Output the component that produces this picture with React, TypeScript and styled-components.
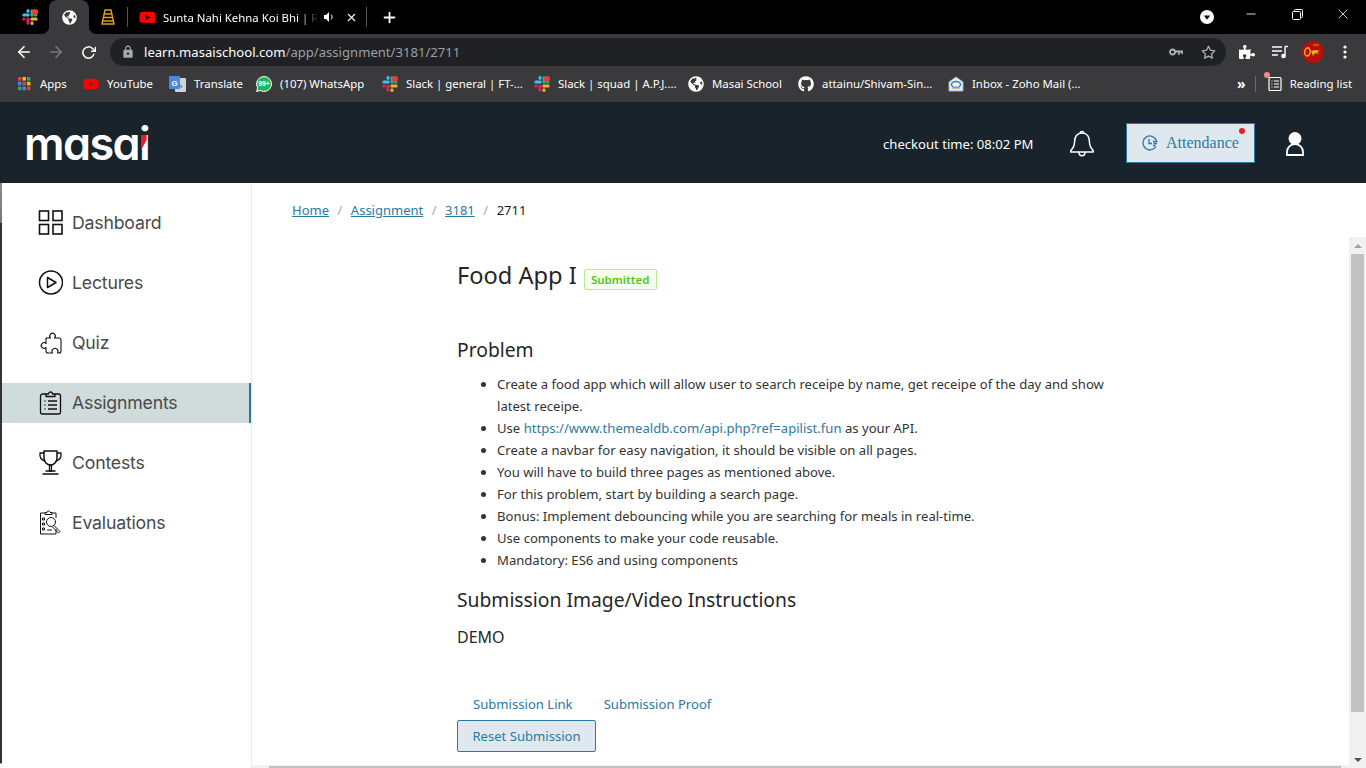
import React from "react";
import styled, { createGlobalStyle } from "styled-components";
import { FaGithub, FaYoutube, FaGlobeAmericas, FaPuzzlePiece } from "react-icons/fa";
import { FiArrowLeft, FiArrowRight, FiRotateCw, FiX, FiPlus, FiStar, FiMinus } from "react-icons/fi";
import { MdLock } from "react-icons/md";

const GlobalStyle = createGlobalStyle`
  html, body { margin: 0; padding: 0; height: 100%; overflow: hidden; background: #fff; }
  * { box-sizing: border-box; }
`;

const chromeFont = `"Noto Sans", "Open Sans", sans-serif`;
const pageFont = `"Noto Sans", "Open Sans", sans-serif`;
const blue = "#2b7aa3";

const Page = styled.div`
  width: 1366px;
  height: 768px;
  display: flex;
  flex-direction: column;
  overflow: hidden;
`;

/* browser chrome */
const TabStrip = styled.div`
  height: 34px;
  background: #000;
  display: flex;
  align-items: center;
  color: #fff;
  font: 11.4px ${chromeFont};
  flex-shrink: 0;
`;

const TabSlot = styled.div<{ $w: number; $inset?: number }>`
  width: ${p => p.$w}px;
  height: 34px;
  padding-left: ${p => p.$inset ?? 0}px;
  flex-shrink: 0;
  display: flex;
  align-items: center;
  justify-content: center;
`;

const ActiveTab = styled(TabSlot)`
  position: relative;
  background: #3a3a3c;
  border-radius: 8px 8px 0 0;
  &::before,
  &::after {
    content: "";
    position: absolute;
    bottom: 0;
    width: 8px;
    height: 8px;
  }
  &::before {
    left: -8px;
    background: radial-gradient(circle at 0 0, transparent 8px, #3a3a3c 8.5px);
  }
  &::after {
    right: -8px;
    background: radial-gradient(circle at 100% 0, transparent 8px, #3a3a3c 8.5px);
  }
`;

const TabDivider = styled.div`
  width: 1px;
  height: 20px;
  background: #55565a;
  flex-shrink: 0;
`;

const MediaTab = styled.div`
  width: 238px;
  height: 34px;
  padding-left: 11px;
  display: flex;
  align-items: center;
  flex-shrink: 0;
`;

const TabTitle = styled.div`
  width: 155px;
  margin-left: 7px;
  overflow: hidden;
  white-space: nowrap;
  -webkit-mask-image: linear-gradient(90deg, #000 88%, transparent 100%);
  mask-image: linear-gradient(90deg, #000 88%, transparent 100%);
`;

const StripSpacer = styled.div`
  flex: 1;
`;

const WindowButton = styled.div<{ $w: number }>`
  width: ${p => p.$w}px;
  height: 28px;
  margin-top: -6px;
  display: flex;
  align-items: center;
  justify-content: center;
  flex-shrink: 0;
`;

const Toolbar = styled.div`
  height: 32px;
  background: #3a3a3c;
  display: flex;
  align-items: flex-end;
  flex-shrink: 0;
  color: #fff;
`;

const NavButton = styled.div<{ $w: number; $dim?: boolean }>`
  width: ${p => p.$w}px;
  height: 28px;
  display: flex;
  align-items: center;
  justify-content: center;
  color: ${p => (p.$dim ? "#7a7a7c" : "#fff")};
  flex-shrink: 0;
`;

const UrlBar = styled.div`
  width: 1116px;
  height: 28px;
  margin: 0 5px 0 6px;
  border-radius: 14px;
  background: #202124;
  display: flex;
  align-items: center;
  padding-left: 11px;
  flex-shrink: 0;
`;

const UrlText = styled.div`
  margin-left: 9px;
  flex: 1;
  font: 13.1px ${chromeFont};
  color: #fff;
`;

const UrlPath = styled.span`
  color: #9aa0a6;
`;

const UrlIcon = styled.div<{ $w: number }>`
  width: ${p => p.$w}px;
  display: flex;
  justify-content: center;
  color: #b0b2b5;
`;

const BookmarkBar = styled.div`
  height: 36px;
  background: #3a3a3c;
  display: flex;
  align-items: center;
  color: #fff;
  font: 11.4px ${chromeFont};
  flex-shrink: 0;
  padding: 0 0 1px 16px;
`;

const Bookmark = styled.div<{ $w: number }>`
  width: ${p => p.$w}px;
  display: flex;
  align-items: center;
  gap: 8px;
  white-space: nowrap;
  flex-shrink: 0;
`;

const BookmarkEnd = styled.div`
  margin-left: auto;
  display: flex;
  align-items: center;
  padding-right: 14px;
`;

const Chevrons = styled.span`
  font-size: 14px;
  font-weight: 700;
  line-height: 14px;
`;

const BarDivider = styled.div`
  width: 1px;
  height: 16px;
  margin: 0 11px 0 9px;
  background: #6a6a6c;
`;

const ReadingIcon = styled.div`
  position: relative;
  width: 16px;
  height: 16px;
  margin-right: 7px;
  &::before {
    content: "";
    position: absolute;
    left: -3px;
    top: -4px;
    width: 6px;
    height: 6px;
    border-radius: 50%;
    background: #f28b82;
  }
`;

/* site header */
const SiteHeader = styled.header`
  height: 81px;
  background: #18232b;
  display: flex;
  align-items: center;
  color: #fff;
  flex-shrink: 0;
`;

const Logo = styled.div`
  margin: 2px 0 0 24px;
  width: 124px;
  font: 600 45px/1 Inter, "Noto Sans", sans-serif;
  font-feature-settings: "cv11";
  letter-spacing: -1.6px;
  color: #fff;
  white-space: nowrap;
  display: flex;
`;

const LogoI = styled.span`
  position: relative;
  &::after {
    content: "";
    position: absolute;
    right: 2.5px;
    top: 14px;
    width: 6px;
    height: 16px;
    background: #e2202c;
    clip-path: polygon(0 0, 100% 0, 100% 30%, 0 100%);
  }
`;

const HeaderRight = styled.div`
  margin-left: auto;
  margin-top: 2px;
  display: flex;
  align-items: center;
`;

const Checkout = styled.div`
  font: 13.1px ${pageFont};
  width: 186px;
  white-space: nowrap;
`;

const AttendanceButton = styled.div`
  position: relative;
  margin: -2px 31px 0 31px;
  width: 129px;
  height: 40px;
  background: #dfe8ee;
  border: 1px solid ${blue};
  display: flex;
  align-items: center;
  padding: 1px 0 0 15px;
  gap: 8px;
  color: ${blue};
  font: 16px "Liberation Serif", serif;
  &::after {
    content: "";
    position: absolute;
    top: 4px;
    right: 9px;
    width: 6px;
    height: 6px;
    border-radius: 50%;
    background: #e2202c;
  }
`;

const PersonWrap = styled.div`
  margin-right: 62px;
  display: flex;
`;

/* body */
const Body = styled.div`
  flex: 1;
  display: flex;
  min-height: 0;
  background: #fff;
`;

const WindowEdge = styled.div`
  width: 2px;
  background: linear-gradient(180deg, #8a8a8a 0, #777 40px, #333 40px, #333 580px, #999 580px, #999 581px, #fff 581px);
  flex-shrink: 0;
`;

const Sidebar = styled.nav`
  width: 250px;
  border-right: 1px solid #e6e8ef;
  padding-top: 20px;
  display: flex;
  flex-direction: column;
  gap: 20px;
  flex-shrink: 0;
`;

const NavItem = styled.div<{ $active?: boolean }>`
  height: 40px;
  display: flex;
  align-items: center;
  gap: 9px;
  padding-left: 36px;
  padding-bottom: 1px;
  background: ${p => (p.$active ? "#d0dbdc" : "transparent")};
  border-right: 2px solid ${p => (p.$active ? blue : "transparent")};
  color: #4a4a4a;
  font: 17.7px Inter, "Noto Sans", sans-serif;
  letter-spacing: -0.2px;
`;

const Content = styled.main`
  flex: 1;
  min-width: 0;
  display: flex;
  flex-direction: column;
  font-family: ${pageFont};
`;

const Breadcrumb = styled.div`
  height: 54px;
  padding: 18px 0 0 40px;
  display: flex;
  font-size: 13px;
  line-height: 18px;
  color: #222;
`;

const CrumbLink = styled.a`
  color: ${blue};
  text-decoration: underline;
`;

const CrumbSep = styled.span`
  color: #aaa;
  margin: 0 8.5px;
`;

const ScrollArea = styled.div`
  flex: 1;
  min-height: 0;
  display: flex;
`;

const ScrollColumn = styled.div`
  flex: 1;
  min-width: 0;
  display: flex;
  flex-direction: column;
`;

const Article = styled.article`
  flex: 1;
  min-height: 0;
  padding: 22px 0 0 205px;
  color: #262626;
`;

const TitleRow = styled.div`
  display: flex;
  align-items: center;
  height: 32px;
`;

const Title = styled.h1`
  margin: 0;
  font-size: 23.6px;
  font-weight: 400;
  color: #262626;
`;

const StatusTag = styled.span`
  margin: 8px 0 0 7px;
  height: 21px;
  width: 73px;
  display: flex;
  align-items: center;
  justify-content: center;
  background: #f6ffed;
  border: 1px solid #b7eb8f;
  border-radius: 2px;
  color: #52c41a;
  font-size: 11.5px;
  font-weight: 600;
`;

const SectionTitle = styled.h2<{ $gap: number }>`
  margin: ${p => p.$gap}px 0 0;
  font-size: 19.3px;
  line-height: 26px;
  font-weight: 400;
  color: #262626;
`;

const List = styled.ul`
  margin: 10px 0 0;
  padding-left: 40px;
  width: 672px;
  font-size: 13.1px;
  line-height: 22px;
  color: #333;
`;

const InlineLink = styled.a`
  color: ${blue};
`;

const Demo = styled.div`
  margin-top: 14px;
  font-size: 16px;
  line-height: 20px;
`;

const LinkRow = styled.div`
  margin-top: 48px;
  display: flex;
  gap: 31px;
  padding-left: 16px;
  font-size: 13.1px;
  line-height: 18px;
  color: ${blue};
`;

const ResetButton = styled.div`
  margin-top: 7px;
  width: 139px;
  height: 32px;
  background: #dfe8ee;
  border: 1px solid ${blue};
  border-radius: 2px;
  color: ${blue};
  font-size: 13.1px;
  display: flex;
  align-items: center;
  justify-content: center;
`;

const HScroll = styled.div`
  height: 3px;
  background: #f1f1f1;
  padding-left: 17px;
  display: flex;
  align-items: flex-end;
  flex-shrink: 0;
`;

const HThumb = styled.div`
  width: 1072px;
  height: 2px;
  background: #c1c1c1;
`;

const Scrollbar = styled.div`
  width: 17px;
  background: #f1f1f1;
  display: flex;
  flex-direction: column;
  flex-shrink: 0;
`;

const ScrollArrow = styled.div<{ $down?: boolean }>`
  height: 17px;
  display: flex;
  align-items: center;
  justify-content: center;
  &::before {
    content: "";
    border-left: 4px solid transparent;
    border-right: 4px solid transparent;
    ${p => (p.$down ? "border-top: 4px solid #505050" : "border-bottom: 4px solid #a3a3a3")};
  }
`;

const ScrollThumb = styled.div`
  margin: 0 2px;
  height: 458px;
  background: #c1c1c1;
`;

const ScrollTrack = styled.div`
  flex: 1;
`;

/* drawings */
const Slack: React.FC<{ badge?: boolean }> = ({ badge }) => (
  <svg width="16" height="16" viewBox="0 0 16 16">
    <g fill="none" strokeWidth="3" strokeLinecap="round">
      <path d="M1.8 6h4.4" stroke="#36c5f0" />
      <path d="M6 1.6v.6" stroke="#36c5f0" />
      <path d="M10 1.8v4.4" stroke="#2eb67d" />
      <path d="M14 6h-.6" stroke="#2eb67d" />
      <path d="M14.2 10H9.8" stroke="#ecb22e" />
      <path d="M10 14.4v-.6" stroke="#ecb22e" />
      <path d="M6 14.2V9.8" stroke="#e01e5a" />
      <path d="M1.6 10h.6" stroke="#e01e5a" />
    </g>
    {badge && <circle cx="13" cy="3" r="3" fill="#ee3b3b" />}
  </svg>
);

const Ladder = () => (
  <svg width="14" height="16" viewBox="0 0 14 16" fill="none" stroke="#e0a020" strokeWidth="1.4">
    <path d="M4 1h6l3 14H1L4 1z" />
    <path d="M3.4 5h7.2M2.6 8.5h8.8M1.9 12h10.2" />
  </svg>
);

const AppsGrid = () => (
  <svg width="16" height="16" viewBox="0 0 16 16">
    {[0, 1, 2].flatMap(r =>
      [0, 1, 2].map(c => (
        <rect
          key={`${r}-${c}`}
          x={2 + c * 4.5}
          y={1 + r * 4.8}
          width="3.4"
          height="3.6"
          fill={["#ea4335", "#fbbc04", "#34a853", "#4285f4", "#ea4335", "#fbbc04", "#34a853", "#4285f4", "#ea4335"][r * 3 + c]}
        />
      ))
    )}
  </svg>
);

const TranslateIcon = () => (
  <svg width="17" height="16" viewBox="0 0 17 16">
    <rect x="6" y="2" width="11" height="14" rx="1" fill="#cfd3d6" />
    <rect x="0" y="0" width="11" height="13" rx="1" fill="#4a86e8" />
    <text x="5.5" y="9.5" fontSize="8" fontWeight="700" fill="#fff" textAnchor="middle" fontFamily="Liberation Sans, sans-serif">
      G
    </text>
    <path d="M11 9l2 2.5" stroke="#7a7d80" strokeWidth="1.4" />
  </svg>
);

const WhatsAppIcon = () => (
  <svg width="16" height="16" viewBox="0 0 16 16">
    <path d="M8 .5a7.5 7.5 0 0 0-6.4 11.400L.6 15.500l3.700-1A7.500 7.500 0 1 0 8 .5z" fill="#25b35a" stroke="#fff" />
    <text x="8" y="10.3" fontSize="6.8" fontWeight="700" fill="#fff" textAnchor="middle" fontFamily="Liberation Sans, sans-serif">
      99+
    </text>
  </svg>
);

const ZohoIcon = () => (
  <svg width="16" height="16" viewBox="0 0 16 16" fill="none">
    <path d="M1 6l7-5 7 5v9H1V6z" fill="#e9eef3" stroke="#8fb4d6" />
    <ellipse cx="8" cy="8.5" rx="4.5" ry="3" stroke="#2d7fc9" strokeWidth="1.4" />
    <path d="M4 12h8" stroke="#e8a33d" strokeWidth="1.2" />
  </svg>
);

const Speaker = () => (
  <svg width="12" height="12" viewBox="0 0 12 12" fill="#fff">
    <path d="M1 4h2l3-3v10L3 8H1z" />
    <path d="M8 3.5a3.4 3.4 0 0 1 0 5" stroke="#fff" fill="none" />
  </svg>
);

const RestoreIcon = () => (
  <svg width="11" height="11" viewBox="0 0 11 11" fill="none" stroke="#fff">
    <rect x=".5" y="2.5" width="8" height="8" rx="1" />
    <path d="M2.5 2.5v-1a1 1 0 0 1 1-1h6a1 1 0 0 1 1 1v6a1 1 0 0 1-1 1h-1" />
  </svg>
);

const TabMenuIcon = () => (
  <svg width="14" height="14" viewBox="0 0 14 14">
    <circle cx="7" cy="7" r="7" fill="#fff" />
    <path d="M3.8 5.4h6.4L7 9.8z" fill="#111" />
  </svg>
);

const KeyIcon = () => (
  <svg width="14" height="8" viewBox="0 0 14 8" fill="none" stroke="#b0b2b5">
    <circle cx="3.5" cy="4" r="2.5" strokeWidth="1.8" />
    <path d="M6 3.5h8" strokeWidth="2" />
    <path d="M10 4v3M13 4v2" strokeWidth="1.5" />
  </svg>
);

const MediaIcon = () => (
  <svg width="16" height="14" viewBox="0 0 16 14" fill="none" stroke="#fff" strokeWidth="1.4">
    <path d="M0 2h10M0 6h10M0 10h6" />
    <path d="M13 1.5v9" />
    <path d="M13 1.5h3" />
    <circle cx="11.5" cy="11" r="1.6" fill="#fff" />
  </svg>
);

const Avatar = () => (
  <svg width="22" height="22" viewBox="0 0 22 22">
    <circle cx="11" cy="11" r="11" fill="#b80f0a" />
    <path d="M3 9c2-3 4-3 5 0s-1 6-3 6-3-3-2-6z" fill="none" stroke="#e8b820" strokeWidth="1.3" />
    <path d="M9 10l5-1 4 1-3 1 2 2-4-1-2 3-1-3z" fill="#e8b820" />
    <path d="M11 4h6" stroke="#e8b820" strokeWidth=".8" />
  </svg>
);

const Dots = () => (
  <svg width="4" height="14" viewBox="0 0 4 14" fill="#fff">
    <circle cx="2" cy="2" r="1.6" />
    <circle cx="2" cy="7" r="1.6" />
    <circle cx="2" cy="12" r="1.6" />
  </svg>
);

const ReadingGlyph = () => (
  <svg width="16" height="16" viewBox="0 0 16 16" fill="none" stroke="#fff" strokeWidth="1.2">
    <rect x="2" y="1.5" width="12" height="13" rx="1" />
    <path d="M4.5 5h1M7 5h5M4.5 8h1M7 8h5M4.5 11h1M7 11h5" />
  </svg>
);

const Bell = () => (
  <svg width="26" height="27" viewBox="0 0 26 27" fill="none" stroke="#fff" strokeWidth="1.5" strokeLinejoin="round">
    <path d="M13 3c-5 0-7.4 4-7.4 8.5 0 5-1.8 7-3.8 9V22h22.400v-1.500c-2-2-3.800-4-3.800-9C20.400 7 18 3 13 3z" />
    <path d="M11.200 3.200a1.800 1.800 0 0 1 3.600 0M10 22c0 5 6 5 6 0" />
  </svg>
);

const ClockList = () => (
  <svg width="16" height="16" viewBox="0 0 16 16" fill="none" stroke={blue} strokeWidth="1.3">
    <path d="M14.5 5.500A7 7 0 1 0 14 11.500" />
    <path d="M7 4v4.500h3" />
    <path d="M11 6.500h4.500M11.500 8.500h3.500M11 10.500h2.500" />
  </svg>
);

const Person = () => (
  <svg width="18" height="24" viewBox="0 0 18 24" fill="none">
    <circle cx="9" cy="6.5" r="6.5" fill="#fff" />
    <path d="M1 23v-3a8 8 0 0 1 16 0v3z" stroke="#fff" strokeWidth="1.8" />
  </svg>
);

const strokeProps = { fill: "none", stroke: "#111", strokeWidth: 1.3, strokeLinejoin: "round" as const };

const DashboardIcon = () => (
  <svg width="25" height="25" viewBox="0 0 25 25" fill="none" stroke="#111" strokeWidth="1.6">
    <rect x="1.5" y="1" width="9" height="9.500" />
    <rect x="15" y="1" width="9" height="9.500" />
    <rect x="1.5" y="14.500" width="9" height="9.500" />
    <rect x="15" y="14.500" width="9" height="9.500" />
  </svg>
);

const PlayIcon = () => (
  <svg width="25" height="25" viewBox="0 0 25 25" fill="none" stroke="#111" strokeWidth="1.5">
    <circle cx="13" cy="12.5" r="11.5" />
    <path d="M9.5 7.500l8.500 5-8.500 5z" strokeLinejoin="round" />
  </svg>
);

/* outline with a knob on top and left, and a round notch in the bottom edge */
const PuzzleIcon = () => (
  <svg width="25" height="25" viewBox="0 0 25 25" {...strokeProps} strokeWidth="1.1">
    <path d="M8 8h4.500a2.800 2.800 0 1 1 4 0H21a2 2 0 0 1 2 2v11a2 2 0 0 1-2 2h-1.500a3 3 0 1 0-5 0H10a2 2 0 0 1-2-2v-3.500a2.800 2.800 0 1 1 0-4z" />
  </svg>
);

const ClipboardIcon = () => (
  <svg width="25" height="25" viewBox="0 0 25 25" {...strokeProps}>
    <path d="M8 4H4.500a2 2 0 0 0-2 2v16a2 2 0 0 0 2 2h16a2 2 0 0 0 2-2V6a2 2 0 0 0-2-2H17" />
    <path d="M8 6.500V4h2.500a2 2 0 0 1 4 0H17v2.500z" />
    <path d="M6.500 11h1M10 11h9M6.500 15h1M10 15h9M6.500 19h1M10 19h9" />
  </svg>
);

const TrophyIcon = () => (
  <svg width="25" height="25" viewBox="0 0 25 25" {...strokeProps}>
    <path d="M6 1h13v7c0 4-3 7-6.500 7S6 12 6 8V1z" strokeWidth="1.5" />
    <path d="M6 3H2c-.5 4 1 7 5 8M19 3h4c.5 4-1 7-5 8" />
    <path d="M11.500 15h2v6h-2z" />
    <path d="M7.500 21h10M4.500 24h16" strokeWidth="1.5" />
  </svg>
);

const EvaluationIcon = () => (
  <svg width="25" height="25" viewBox="0 0 25 25" {...strokeProps} strokeWidth="1">
    <path d="M7 3H2.500v21h15.500v-5M14 3h4v5" />
    <path d="M7 4.500V2.500h2a1.500 1.500 0 0 1 3 0h2v2z" />
    <circle cx="13" cy="12" r="4.5" />
    <path d="M16 15.500l6 6-1.500 1.500-6-6" />
    <path d="M4.500 8h2v2h-2zM4.500 13h2v2h-2zM4.500 18h2v2h-2zM9 20h5" />
  </svg>
);

const navItems = [
  { label: "Dashboard", icon: <DashboardIcon /> },
  { label: "Lectures", icon: <PlayIcon /> },
  { label: "Quiz", icon: <PuzzleIcon /> },
  { label: "Assignments", icon: <ClipboardIcon />, active: true },
  { label: "Contests", icon: <TrophyIcon /> },
  { label: "Evaluations", icon: <EvaluationIcon /> }
];

const problems: React.ReactNode[] = [
  "Create a food app which will allow user to search receipe by name, get receipe of the day and show latest receipe.",
  <>
    Use <InlineLink>https://www.themealdb.com/api.php?ref=apilist.fun</InlineLink> as your API.
  </>,
  "Create a navbar for easy navigation, it should be visible on all pages.",
  "You will have to build three pages as mentioned above.",
  "For this problem, start by building a search page.",
  "Bonus: Implement debouncing while you are searching for meals in real-time.",
  "Use components to make your code reusable.",
  "Mandatory: ES6 and using components"
];

const App: React.FC = () => (
  <Page>
    <GlobalStyle />
    <TabStrip>
      <TabSlot $w={49} $inset={11}>
        <Slack badge />
      </TabSlot>
      <ActiveTab $w={40}>
        <FaGlobeAmericas size={15} />
      </ActiveTab>
      <TabSlot $w={38}>
        <Ladder />
      </TabSlot>
      <TabDivider />
      <MediaTab>
        <FaYoutube size={17} color="#f00" />
        <TabTitle>Sunta Nahi Kehna Koi Bhi | R</TabTitle>
        <TabSlot $w={22}>
          <Speaker />
        </TabSlot>
        <TabSlot $w={22}>
          <FiX size={13} />
        </TabSlot>
      </MediaTab>
      <TabDivider />
      <TabSlot $w={45}>
        <FiPlus size={17} strokeWidth={2.5} />
      </TabSlot>
      <StripSpacer />
      <TabSlot $w={20}>
        <TabMenuIcon />
      </TabSlot>
      <TabSlot $w={11} />
      <WindowButton $w={46}>
        <FiMinus size={14} strokeWidth={1.5} />
      </WindowButton>
      <WindowButton $w={46}>
        <RestoreIcon />
      </WindowButton>
      <WindowButton $w={46}>
        <FiX size={16} strokeWidth={1.2} />
      </WindowButton>
    </TabStrip>

    <Toolbar>
      <NavButton $w={8} />
      <NavButton $w={32}>
        <FiArrowLeft size={18} strokeWidth={2.2} />
      </NavButton>
      <NavButton $w={32} $dim>
        <FiArrowRight size={18} strokeWidth={2.2} />
      </NavButton>
      <NavButton $w={32}>
        <FiRotateCw size={15} strokeWidth={2.4} />
      </NavButton>
      <UrlBar>
        <MdLock size={14} color="#a6a8ab" />
        <UrlText>
          learn.masaischool.com<UrlPath>/app/assignment/3181/2711</UrlPath>
        </UrlText>
        <UrlIcon $w={28}>
          <KeyIcon />
        </UrlIcon>
        <UrlIcon $w={36}>
          <FiStar size={15} />
        </UrlIcon>
      </UrlBar>
      <NavButton $w={32}>
        <FaPuzzlePiece size={16} />
      </NavButton>
      <NavButton $w={34}>
        <MediaIcon />
      </NavButton>
      <NavButton $w={32}>
        <Avatar />
      </NavButton>
      <NavButton $w={32}>
        <Dots />
      </NavButton>
    </Toolbar>

    <BookmarkBar>
      <Bookmark $w={67}>
        <AppsGrid />
        Apps
      </Bookmark>
      <Bookmark $w={86}>
        <FaYoutube size={16} color="#f00" />
        YouTube
      </Bookmark>
      <Bookmark $w={87}>
        <TranslateIcon />
        Translate
      </Bookmark>
      <Bookmark $w={126}>
        <WhatsAppIcon />
        (107) WhatsApp
      </Bookmark>
      <Bookmark $w={152}>
        <Slack badge />
        Slack | general | FT-...
      </Bookmark>
      <Bookmark $w={154}>
        <Slack badge />
        Slack | squad | A.P.J....
      </Bookmark>
      <Bookmark $w={110}>
        <FaGlobeAmericas size={16} />
        Masai School
      </Bookmark>
      <Bookmark $w={150}>
        <FaGithub size={16} />
        attainu/Shivam-Sin...
      </Bookmark>
      <Bookmark $w={140}>
        <ZohoIcon />
        Inbox - Zoho Mail (...
      </Bookmark>
      <BookmarkEnd>
        <Chevrons>»</Chevrons>
        <BarDivider />
        <ReadingIcon>
          <ReadingGlyph />
        </ReadingIcon>
        Reading list
      </BookmarkEnd>
    </BookmarkBar>

    <SiteHeader>
      <Logo>
        masa
        <LogoI>i</LogoI>
      </Logo>
      <HeaderRight>
        <Checkout>checkout time: 08:02 PM</Checkout>
        <Bell />
        <AttendanceButton>
          <ClockList />
          Attendance
        </AttendanceButton>
        <PersonWrap>
          <Person />
        </PersonWrap>
      </HeaderRight>
    </SiteHeader>

    <Body>
      <WindowEdge />
      <Sidebar>
        {navItems.map(item => (
          <NavItem key={item.label} $active={item.active}>
            {item.icon}
            {item.label}
          </NavItem>
        ))}
      </Sidebar>
      <Content>
        <Breadcrumb>
          <CrumbLink>Home</CrumbLink>
          <CrumbSep>/</CrumbSep>
          <CrumbLink>Assignment</CrumbLink>
          <CrumbSep>/</CrumbSep>
          <CrumbLink>3181</CrumbLink>
          <CrumbSep>/</CrumbSep>
          2711
        </Breadcrumb>
        <ScrollArea>
          <ScrollColumn>
            <Article>
              <TitleRow>
                <Title>Food App I</Title>
                <StatusTag>Submitted</StatusTag>
              </TitleRow>
              <SectionTitle $gap={46}>Problem</SectionTitle>
              <List>
                {problems.map((p, i) => (
                  <li key={i}>{p}</li>
                ))}
              </List>
              <SectionTitle $gap={16}>Submission Image/Video Instructions</SectionTitle>
              <Demo>DEMO</Demo>
              <LinkRow>
                <span>Submission Link</span>
                <span>Submission Proof</span>
              </LinkRow>
              <ResetButton>Reset Submission</ResetButton>
            </Article>
            <HScroll>
              <HThumb />
            </HScroll>
          </ScrollColumn>
          <Scrollbar>
            <ScrollArrow />
            <ScrollThumb />
            <ScrollTrack />
            <ScrollArrow $down />
          </Scrollbar>
        </ScrollArea>
      </Content>
    </Body>
  </Page>
);

export default App;
